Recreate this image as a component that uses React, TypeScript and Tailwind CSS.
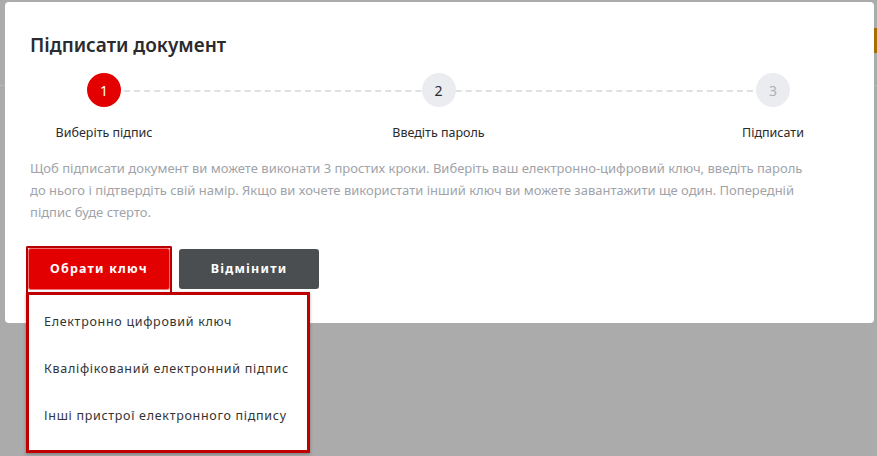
const steps = [
  { n: 1, label: "Виберіть підпис", state: "active" },
  { n: 2, label: "Введіть пароль", state: "next" },
  { n: 3, label: "Підписати", state: "idle" },
];

const options = [
  "Електронно цифровий ключ",
  "Кваліфікований електронний підпис",
  "Інші пристрої електронного підпису",
];

export default function App() {
  return (
    <div className="relative h-[456px] w-[877px] overflow-hidden bg-[#ababab] font-['Noto_Sans',sans-serif]">
      {/* page behind the backdrop */}
      <header className="flex h-[86px] items-start justify-end border-b border-[#b8b8b8] pt-[28px]">
        <div className="h-[25px] w-[4px] bg-[#a86c00]" />
      </header>

      {/* modal */}
      <div className="absolute left-[5px] top-[2px] h-[321px] w-[869px] rounded-[4px] bg-white">
        <h2 className="pl-[25px] pt-[31px] text-[19px] font-semibold leading-[24px] text-[#2a2b2e]">
          Підписати документ
        </h2>

        <div className="relative ml-[49px] mr-[51px] mt-[16px] h-[66px]">
          <div className="absolute left-[50px] right-[50px] top-[17px] border-t-2 border-dashed border-[#dfe0e3]" />
          <div className="relative flex justify-between">
            {steps.map((s) => (
              <div key={s.n} className="flex w-[100px] flex-col items-center">
                <div
                  className={
                    s.state === "active"
                      ? "flex h-[34px] w-[34px] items-center justify-center rounded-full bg-[#e30000] text-[14px] text-white"
                      : s.state === "next"
                      ? "flex h-[34px] w-[34px] items-center justify-center rounded-full bg-[#ebecef] text-[14px] text-[#2a2b2e]"
                      : "flex h-[34px] w-[34px] items-center justify-center rounded-full bg-[#ebecef] text-[14px] text-[#aeb0b5]"
                  }
                >
                  {s.n}
                </div>
                <div className="mt-[18px] whitespace-nowrap text-[12.5px] leading-[16px] text-[#2a2b2e]">
                  {s.label}
                </div>
              </div>
            ))}
          </div>
        </div>

        <p className="mt-[18px] w-[810px] pl-[25px] text-[13px] leading-[22px] text-[#a0a3a9]">
          Щоб підписати документ ви можете виконати 3 простих кроки. Виберіть ваш електронно-цифровий ключ, введіть пароль до нього і підтвердіть свій намір. Якщо ви хочете використати інший ключ ви можете завантажити ще один. Попередній підпис буде стерто.
        </p>

        <div className="mt-[23px] flex items-start gap-[7px] pl-[21px]">
          <div className="relative">
            <div className="rounded-t-[2px] border-2 border-[#b80000] border-b-0 pb-[2px]">
              <button className="flex h-[42px] w-[142px] items-center justify-center rounded-[3px] bg-[#e30000] text-[12.5px] font-bold tracking-[1.2px] text-white shadow-[inset_0_0_0_1px_rgba(255,255,255,0.45)]">
                Обрати ключ
              </button>
            </div>
            <ul className="absolute left-0 top-[46px] w-[284px] border-[3px] border-[#c00000] bg-white pb-[10px] pt-[4px] shadow-[0_1px_3px_rgba(0,0,0,0.3)]">
              {options.map((o) => (
                <li
                  key={o}
                  className="flex h-[47px] items-center pl-[15px] text-[12.5px] tracking-[0.7px] text-[#333436]"
                >
                  {o}
                </li>
              ))}
            </ul>
          </div>
          <button className="mt-[3px] flex h-[40px] w-[140px] items-center justify-center rounded-[3px] bg-[#4b4e50] text-[12.5px] font-bold tracking-[1.2px] text-white">
            Відмінити
          </button>
        </div>
      </div>
    </div>
  );
}
